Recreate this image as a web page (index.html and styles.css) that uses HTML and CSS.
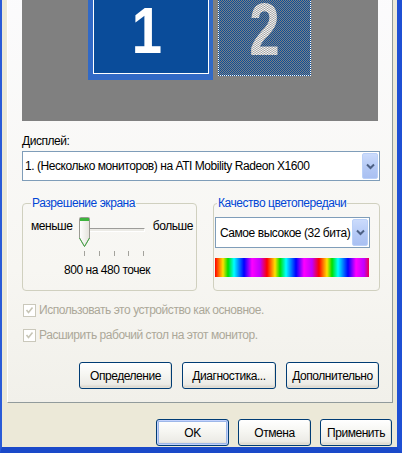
FILE: index.html
```html
<!DOCTYPE html>
<html lang="ru">
<head>
<meta charset="utf-8">
<title>Свойства: Экран — Параметры</title>
<link rel="stylesheet" href="styles.css">
</head>
<body>
<div class="window">
  <div class="page">
    <div class="arrange">
      <div class="monitor mon-1"><div class="screen"><span class="num">1</span></div></div>
      <div class="monitor mon-2"><span class="num num-dither">2</span></div>
    </div>

    <div class="label">Дисплей:</div>
    <div class="combo combo-wide">
      <span class="combo-text">1. (Несколько мониторов) на ATI Mobility Radeon X1600</span>
      <span class="drop"><svg width="9" height="7" viewBox="0 0 9 7"><path d="M1 1.5 L4.5 5 L8 1.5" fill="none" stroke="#4D6185" stroke-width="2"/></svg></span>
    </div>

    <div class="groups">
      <fieldset class="group group-res">
        <legend>Разрешение экрана</legend>
        <div class="slider-row">
          <span class="end-label">меньше</span>
          <div class="slider">
            <div class="track"></div>
            <svg class="thumb" width="11" height="31" viewBox="0 0 11 31">
              <defs>
                <linearGradient id="thumbFill" x1="0" y1="0" x2="1" y2="0">
                  <stop offset="0" stop-color="#FFFFFF"/>
                  <stop offset="1" stop-color="#E4E3DC"/>
                </linearGradient>
              </defs>
              <path d="M1.5 0.5 H9.5 Q10.5 0.5 10.5 1.5 V21 L5.5 29.5 L0.5 21 V1.5 Q0.5 0.5 1.5 0.5 Z" fill="url(#thumbFill)" stroke="#9A9A92"/>
              <rect x="1" y="1" width="9" height="3" fill="#3DB43D"/>
              <path d="M0.5 21 L5.5 29.5 L10.5 21" fill="none" stroke="#45A845"/>
            </svg>
          </div>
          <span class="end-label end-right">больше</span>
        </div>
        <div class="ticks"><i></i><i></i><i></i><i></i><i></i></div>
        <div class="res">800 на 480 точек</div>
      </fieldset>

      <fieldset class="group group-color">
        <legend>Качество цветопередачи</legend>
        <div class="combo combo-small">
          <span class="combo-text">Самое высокое (32 бита)</span>
          <span class="drop"><svg width="9" height="7" viewBox="0 0 9 7"><path d="M1 1.5 L4.5 5 L8 1.5" fill="none" stroke="#4D6185" stroke-width="2"/></svg></span>
        </div>
        <div class="spectrum"></div>
      </fieldset>
    </div>

    <div class="check check-first">
      <span class="box"><svg width="9" height="9" viewBox="0 0 9 9"><path d="M1.5 4 L3.5 6.5 L7.5 1.5" fill="none" stroke="#C7C5B6" stroke-width="1.6"/></svg></span>
      <span>Использовать это устройство как основное.</span>
    </div>
    <div class="check">
      <span class="box"><svg width="9" height="9" viewBox="0 0 9 9"><path d="M1.5 4 L3.5 6.5 L7.5 1.5" fill="none" stroke="#C7C5B6" stroke-width="1.6"/></svg></span>
      <span>Расширить рабочий стол на этот монитор.</span>
    </div>

    <div class="actions">
      <button class="btn btn-page">Определение</button>
      <button class="btn btn-page btn-mid">Диагностика...</button>
      <button class="btn btn-page">Дополнительно</button>
    </div>
  </div>

  <div class="footer">
    <button class="btn btn-dlg btn-default">OK</button>
    <button class="btn btn-dlg">Отмена</button>
    <button class="btn btn-dlg btn-apply">Применить</button>
  </div>
</div>
</body>
</html>
```

FILE: styles.css
```css
* {
  box-sizing: border-box;
}

html,
body {
  margin: 0;
  padding: 0;
}

body {
  width: 402px;
  height: 453px;
  overflow: hidden;
  background: #ECE9D8;
  font-family: "Liberation Sans", Arial, sans-serif;
  font-size: 12px;
  letter-spacing: -0.45px;
  color: #000;
}

/* dialog frame: blue Luna border on the sides and bottom */
.window {
  width: 402px;
  height: 453px;
  overflow: hidden;
  background: #ECE9D8;
  border-left: 2px solid #2A5BD7;
  border-right: 5px solid #1F50D4;
  border-bottom: 6px solid #1A49C9;
  display: flex;
  flex-direction: column;
}

/* tab page */
.page {
  flex: none;
  height: 443px;
  margin: -40px 4px 0 5px;
  padding: 10px 12px 0 14px;
  border: 1px solid;
  border-color: #FFFFFF #919B9C #919B9C #FFFFFF;
  background: linear-gradient(#FCFCFE 0%, #F7F6F2 70%, #F1F0EA 100%);
  display: flex;
  flex-direction: column;
}

/* monitor arrangement canvas */
.arrange {
  position: relative;
  flex: none;
  width: 356px;
  height: 150px;
  background: #808080;
}

.monitor {
  position: absolute;
  display: flex;
  align-items: center;
  justify-content: center;
}

.mon-1 {
  left: 66px;
  top: 12px;
  width: 125px;
  height: 97px;
  padding: 4px 4px 6px 5px;
  background: #3169C6;
}

.mon-1 .screen {
  width: 100%;
  height: 100%;
  border: 1px solid #FFFFFF;
  background: #0A4C9A;
  display: flex;
  align-items: center;
  justify-content: center;
}

.mon-2 {
  left: 196px;
  top: 10px;
  width: 93px;
  height: 95px;
  border: 1px dotted #FFFFFF;
  background: repeating-conic-gradient(#0B4E9C 0 25%, #808080 0 50%) 0 0 / 2px 2px;
}

.num {
  display: block;
  font-family: "Liberation Sans", Arial, sans-serif;
  font-weight: bold;
  letter-spacing: 0;
  color: #FFFFFF;
}

.mon-1 .num {
  font-size: 64px;
  line-height: 52px;
  margin: 0 0 0 -8px;
  transform: scaleX(0.85);
}

.mon-2 .num {
  font-size: 74px;
  line-height: 56px;
  margin-top: 2px;
  transform: scaleX(0.74);
}

.num-dither {
  background: repeating-conic-gradient(#FFFFFF 0 25%, #9C9C9C 0 50%) 0 0 / 2px 2px;
  -webkit-background-clip: text;
  background-clip: text;
  color: transparent;
}

.label {
  margin-top: 13px;
  line-height: 14px;
  height: 14px;
}

/* combo boxes */
.combo {
  display: flex;
  align-items: center;
  background: #FFFFFF;
  border: 1px solid #7F9DB9;
  padding: 0 1px 0 2px;
}

.combo-wide {
  margin-top: 3px;
  width: 358px;
  height: 30px;
}

.combo-text {
  flex: 1;
  white-space: nowrap;
  overflow: hidden;
}

.drop {
  flex: none;
  width: 16px;
  height: calc(100% - 2px);
  border: 1px solid #BAD0F8;
  border-radius: 2px;
  background: linear-gradient(#CBDBFC, #B3C8F5 60%, #A9C0F2);
  display: flex;
  align-items: center;
  justify-content: center;
}

/* group boxes */
.groups {
  margin-top: 15px;
  display: grid;
  grid-template-columns: 175px 167px;
  column-gap: 16px;
}

.group {
  margin: 0;
  height: 95px;
  min-width: 0;
  border: 1px solid #D0D0BF;
  border-radius: 4px;
  padding: 0 3px 0 8px;
}

.group legend {
  padding: 0 1px;
  line-height: 14px;
  color: #0046D5;
}

.group-color {
  padding: 0 2px 0 1px;
}

.group-color legend {
  margin-left: 2px;
}

.slider-row {
  margin-top: 7px;
  height: 31px;
  display: grid;
  grid-template-columns: 48px 66px 1fr;
  align-items: start;
}

.end-label {
  margin-top: 2px;
  line-height: 14px;
}

.end-right {
  justify-self: end;
}

.slider {
  position: relative;
  height: 31px;
}

.track {
  margin: 11px 0 0 2px;
  height: 4px;
  border: 1px solid;
  border-color: #9D9C99 #FFFFFF #FFFFFF #9D9C99;
  background: #ECEBE6;
}

.thumb {
  position: absolute;
  left: 0;
  top: 0;
}

.ticks {
  margin: 3px 0 0 53px;
  width: 60px;
  height: 5px;
  display: flex;
  justify-content: space-between;
}

.ticks i {
  width: 1px;
  height: 5px;
  background: #A3A29C;
}

.res {
  margin: 7px 0 0 33px;
  line-height: 14px;
}

.combo-small {
  margin-top: 7px;
  width: 155px;
  height: 31px;
  padding-left: 4px;
}

.spectrum {
  margin-top: 10px;
  width: 154px;
  height: 19px;
  background: repeating-linear-gradient(90deg,
    #FF0000 0px, #FFE000 8px, #00E000 13px, #00FFFF 19px,
    #0000FF 29px, #FF00FF 37px, #C000FF 45px, #FF0000 52px);
}

/* disabled check boxes */
.check {
  display: flex;
  align-items: center;
  height: 16px;
  color: #ACA899;
  line-height: 14px;
  margin-left: 1px;
}

.check-first {
  margin-top: 11px;
}

.check + .check {
  margin-top: 9px;
}

.box {
  flex: none;
  width: 13px;
  height: 13px;
  margin-right: 3px;
  border: 1px solid #CAC8BB;
  background: #FFFFFF;
  display: flex;
  align-items: center;
  justify-content: center;
}

/* push buttons */
.btn {
  height: 27px;
  padding: 0;
  font: inherit;
  letter-spacing: inherit;
  color: #000;
  border: 1px solid #003C74;
  border-radius: 3px;
  background: linear-gradient(#FFFFFF 0%, #F6F6F2 45%, #ECEBE6 85%, #D6D0C5 100%);
  box-shadow: inset -1px -1px 0 #E3E0D6;
}

.actions {
  margin-top: auto;
  margin-bottom: 13px;
  display: flex;
  justify-content: flex-end;
  gap: 10px;
  padding-right: 1px;
}

.btn-page {
  width: 93px;
}

.btn-mid {
  width: 94px;
}

.footer {
  flex: 1;
  display: flex;
  justify-content: flex-end;
  align-items: flex-start;
  gap: 9px;
  padding: 16px 5px 0 0;
}

.btn-dlg {
  width: 73px;
}

.btn-apply {
  width: 72px;
}

.btn-default {
  box-shadow: inset 0 0 0 1px #C3D2FD, inset 0 0 0 2px #9DB7E8;
}
```
